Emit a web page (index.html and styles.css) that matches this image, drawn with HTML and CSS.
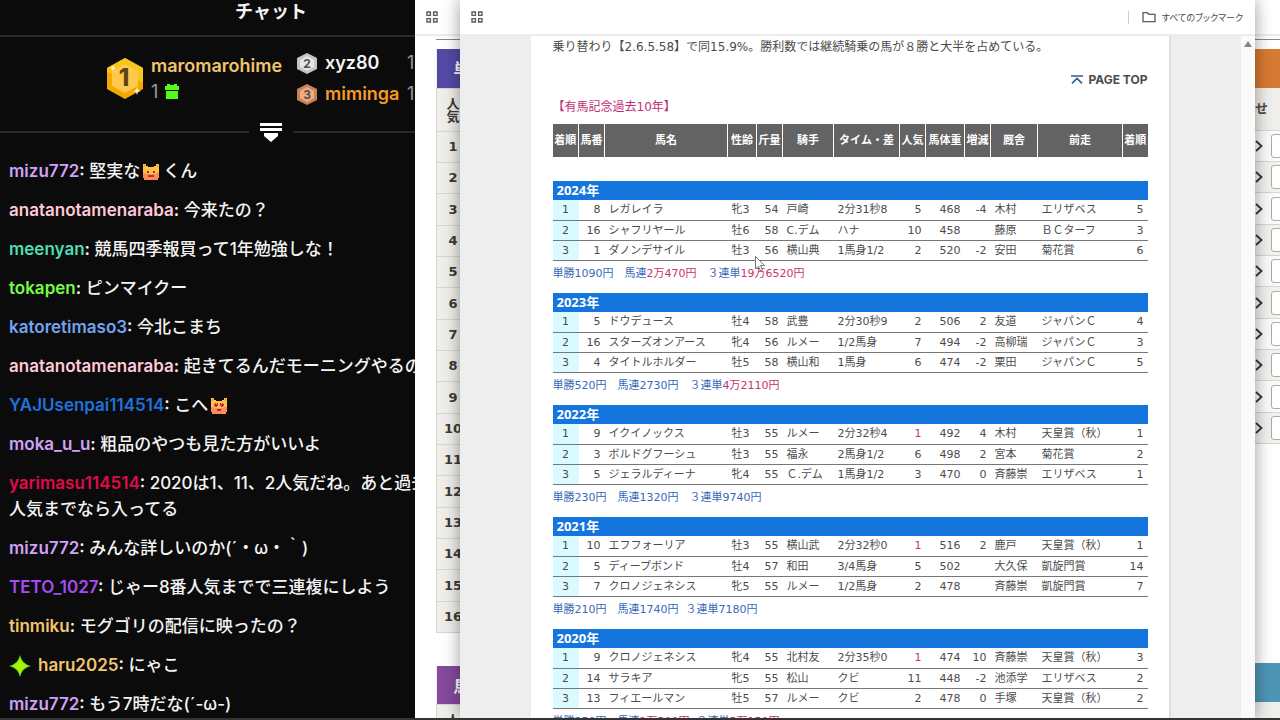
FILE: index.html
```
<!DOCTYPE html>
<html lang="ja">
<head>
    <meta charset="UTF-8">
    <meta name="viewport" content="width=device-width, initial-scale=1.0">
    <title>有馬記念過去10年</title>
    <link rel="stylesheet" href="styles.css">
</head>
<body>
    <!-- Shared icons -->
    <svg class="sprite" aria-hidden="true">
        <symbol id="apps" viewBox="0 0 12 12">
            <path d="M1 1h3.4v3.4H1zM7.6 1H11v3.4H7.6zM1 7.6h3.4V11H1zM7.6 7.6H11V11H7.6z" fill="none" stroke="#5a5a5a" stroke-width="1.4"/>
        </symbol>
        <symbol id="cat" viewBox="0 0 16 16">
            <path d="M0 0h3v2h2v1h6V2h2V0h3v14h-1v2H1v-2H0z" fill="#ffc247"/>
            <path d="M0 9h3v1h10V9h3v5h-1v2H1v-2H0z" fill="#ff8a5c"/>
            <path d="M1 1h1v2H1zM14 1h1v2h-1z" fill="#f08a3c"/>
        </symbol>
        <symbol id="chevron" viewBox="0 0 8 12">
            <path d="M1 1l5.5 5L1 11" fill="none" stroke="#333" stroke-width="1.8"/>
        </symbol>
    </svg>

    <div class="screen">
        <!-- Chat -->
        <aside class="chat">
            <div class="chat-inner">
                <h1 class="chat-title">チャット</h1>

                <div class="leaders">
                    <svg class="medal-big" viewBox="0 0 36 41">
                        <path d="M18 0l18 10v21L18 41 0 31V10z" fill="#f5a800"/>
                        <path d="M18 0l18 10v14L0 14v-4z" fill="#f7c61c"/>
                        <path d="M18 6l13 7v15l-13 7-13-7V13z" fill="#ffc94f"/>
                        <text x="17" y="28" text-anchor="middle" class="medal-big-num">1</text>
                        <path d="M30 29l1 3 3 1-3 1-1 3-1-3-3-1 3-1zM6 7l1 2 2 1-2 1-1 2-1-2-2-1 2-1z" fill="#fff3bd"/>
                    </svg>
                    <div class="leader-first">
                        <span class="gold">maromarohime</span>
                        <span class="gifts">1
                            <svg class="gift" viewBox="0 0 14 15"><path d="M2 0h3v1h4V0h3v2h2v4H0V2h2zM1 7h12v8H1z" fill="#53fc18"/></svg>
                        </span>
                    </div>
                    <ul class="leader-rest">
                        <li>
                            <svg class="medal" viewBox="0 0 20 21">
                                <path d="M10 0l10 5v11l-10 5-10-5V5z" fill="#c4c4c6"/>
                                <path d="M10 3l7 4v7l-7 4-7-4V7z" fill="#e6e6e8"/>
                                <text x="10" y="15" text-anchor="middle" class="medal-num">2</text>
                            </svg>
                            <span>xyz80</span><span class="count">1</span>
                        </li>
                        <li>
                            <svg class="medal" viewBox="0 0 20 21">
                                <path d="M10 0l10 5v11l-10 5-10-5V5z" fill="#c9835a"/>
                                <path d="M10 3l7 4v7l-7 4-7-4V7z" fill="#f0ad85"/>
                                <text x="10" y="15" text-anchor="middle" class="medal-num">3</text>
                            </svg>
                            <span class="orange">miminga</span><span class="count">1</span>
                        </li>
                    </ul>
                </div>

                <div class="divider">
                    <button class="collapse" aria-label="リーダーボードを開く">
                        <svg viewBox="0 0 22 19"><path d="M0 0h22v3H0zM0 5h22v3H0zM4 10h14v3l-7 6-7-6z" fill="#fff"/></svg>
                    </button>
                </div>

                <div class="messages">
                    <p><b class="lilac">mizu772</b><b>:</b> 堅実な<svg class="emote" viewBox="0 0 16 16"><use href="#cat"/><path d="M4 7h2v2H4zM10 7h2v2h-2z" fill="#8a3a1e"/><path d="M5 11h6v2H5z" fill="#b83232"/></svg>くん</p>
                    <p><b class="pink">anatanotamenaraba</b><b>:</b> 今来たの？</p>
                    <p><b class="teal">meenyan</b><b>:</b> 競馬四季報買って1年勉強しな！</p>
                    <p><b class="green">tokapen</b><b>:</b> ピンマイクー</p>
                    <p><b class="sky">katoretimaso3</b><b>:</b> 今北こまち</p>
                    <p><b class="pink">anatanotamenaraba</b><b>:</b> 起きてるんだモーニングやるの</p>
                    <p><b class="blue">YAJUsenpai114514</b><b>:</b> こへ<svg class="emote" viewBox="0 0 16 16"><use href="#cat"/><path d="M3 6h1v-1h1v1h1V5h1v3H6v1H4V8H3zM9 5h1v1h1V5h1v1h1v2h-1v1h-2V8H9z" fill="#d8204a"/><path d="M6 11h4v2H6z" fill="#a03030"/></svg></p>
                    <p><b class="lilac">moka_u_u</b><b>:</b> 粗品のやつも見た方がいいよ</p>
                    <p><b class="red">yarimasu114514</b><b>:</b> 2020は1、11、2人気だね。あと過去<br>人気までなら入ってる</p>
                    <p><b class="lilac">mizu772</b><b>:</b> みんな詳しいのか(´・ω・｀)</p>
                    <p><b class="violet">TETO_1027</b><b>:</b> じゃー8番人気までで三連複にしよう</p>
                    <p><b class="gold">tinmiku</b><b>:</b> モグゴリの配信に映ったの？</p>
                    <p><svg class="spark" viewBox="0 0 22 22"><path d="M11 0q2 9 11 11q-9 2-11 11q-2-9-11-11q9-2 11-11z" fill="#5fe01a"/><path d="M11 3q2 6 8 8q-6 2-8 8q-2-6-8-8q6-2 8-8z" fill="#a8f500"/></svg><b class="gold">haru2025</b><b>:</b> にゃこ</p>
                    <p><b class="lilac">mizu772</b><b>:</b> もう7時だな(´-ω-)</p>
                </div>
            </div>
        </aside>

        <div class="desktop">
            <!-- Odds window behind -->
            <section class="odds">
                <div class="toolbar"><svg class="apps"><use href="#apps"/></svg></div>
                <div class="odds-body">
                    <div class="odds-left">
                        <table class="rank">
                            <thead>
                                <tr class="band indigo"><th>単勝</th></tr>
                                <tr class="sub"><th>人<br>気</th></tr>
                            </thead>
                            <tbody>
                                <tr><td>1</td></tr>
                                <tr><td>2</td></tr>
                                <tr><td>3</td></tr>
                                <tr><td>4</td></tr>
                                <tr><td>5</td></tr>
                                <tr><td>6</td></tr>
                                <tr><td>7</td></tr>
                                <tr><td>8</td></tr>
                                <tr><td>9</td></tr>
                                <tr><td>10</td></tr>
                                <tr><td>11</td></tr>
                                <tr><td>12</td></tr>
                                <tr><td>13</td></tr>
                                <tr><td>14</td></tr>
                                <tr><td>15</td></tr>
                                <tr><td>16</td></tr>
                            </tbody>
                        </table>
                        <table class="rank next">
                            <tr class="band purple"><th>馬連</th></tr>
                            <tr class="sub"><th>人<br>気</th></tr>
                        </table>
                    </div>
                    <div class="odds-right">
                        <div class="combo-band orange-bg"></div>
                        <div class="combo-head">せ</div>
                        <ul class="combos">
                            <li><svg><use href="#chevron"/></svg><button aria-label="1番人気"></button></li>
                            <li><svg><use href="#chevron"/></svg><button aria-label="2番人気"></button></li>
                            <li><svg><use href="#chevron"/></svg><button aria-label="3番人気"></button></li>
                            <li><svg><use href="#chevron"/></svg><button aria-label="4番人気"></button></li>
                            <li><svg><use href="#chevron"/></svg><button aria-label="5番人気"></button></li>
                            <li><svg><use href="#chevron"/></svg><button aria-label="6番人気"></button></li>
                            <li><svg><use href="#chevron"/></svg><button aria-label="7番人気"></button></li>
                            <li><svg><use href="#chevron"/></svg><button aria-label="8番人気"></button></li>
                            <li><svg><use href="#chevron"/></svg><button aria-label="9番人気"></button></li>
                            <li><svg><use href="#chevron"/></svg><button aria-label="10番人気"></button></li>
                        </ul>
                        <div class="combo-band blue-bg"></div>
                        <div class="combo-head"></div>
                    </div>
                </div>
            </section>

            <!-- Race data window in front -->
            <section class="race">
                <div class="toolbar">
                    <svg class="apps"><use href="#apps"/></svg>
                    <a class="bookmarks" href="#">
                        <svg viewBox="0 0 14 12"><path d="M1 10V1.7h4.400L7 3.400h6V10.600H1z" fill="none" stroke="#5a5a5a" stroke-width="1.3"/></svg>
                        すべてのブックマーク
                    </a>
                </div>
                <div class="race-body">
                    <main class="page">
                        <p class="lead">乗り替わり【2.6.5.58】で同15.9%。勝利数では継続騎乗の馬が８勝と大半を占めている。</p>
                        <a class="page-top" href="#">
                            <svg viewBox="0 0 12 9"><path d="M0 1h12M1 8.400l5-5 5 5" fill="none" stroke="#2f5f9a" stroke-width="1.6"/></svg>
                            PAGE TOP
                        </a>
                        <h2>【有馬記念過去10年】</h2>
                        <table class="results">
                            <thead>
                                <tr><th class="w-s">着順</th><th class="w-s">馬番</th><th class="w-name">馬名</th><th class="w-sex">性齢</th><th class="w-s">斤量</th><th class="w-jockey">騎手</th><th class="w-time">タイム・差</th><th class="w-s">人気</th><th class="w-weight">馬体重</th><th class="w-s">増減</th><th class="w-stable">厩舎</th><th class="w-prev">前走</th><th>着順</th></tr>
                            </thead>
                            <tbody>
                                <tr class="year"><th colspan="13">2024年</th></tr>
                                <tr><td>1</td><td>8</td><td>レガレイラ</td><td>牝3</td><td>54</td><td>戸崎</td><td>2分31秒8</td><td>5</td><td>468</td><td>-4</td><td>木村</td><td>エリザベス</td><td>5</td></tr>
                                <tr><td>2</td><td>16</td><td>シャフリヤール</td><td>牡6</td><td>58</td><td>C.デム</td><td>ハナ</td><td>10</td><td>458</td><td></td><td>藤原</td><td>ＢＣターフ</td><td>3</td></tr>
                                <tr><td>3</td><td>1</td><td>ダノンデサイル</td><td>牡3</td><td>56</td><td>横山典</td><td>1馬身1/2</td><td>2</td><td>520</td><td>-2</td><td>安田</td><td>菊花賞</td><td>6</td></tr>
                                <tr class="payout"><td colspan="13">単勝1090円　馬連<em>2万470円</em>　３連単<em>19万6520円</em></td></tr>
                            </tbody>
                            <tbody>
                                <tr class="year"><th colspan="13">2023年</th></tr>
                                <tr><td>1</td><td>5</td><td>ドウデュース</td><td>牡4</td><td>58</td><td>武豊</td><td>2分30秒9</td><td>2</td><td>506</td><td>2</td><td>友道</td><td>ジャパンＣ</td><td>4</td></tr>
                                <tr><td>2</td><td>16</td><td>スターズオンアース</td><td>牝4</td><td>56</td><td>ルメー</td><td>1/2馬身</td><td>7</td><td>494</td><td>-2</td><td>高柳瑞</td><td>ジャパンＣ</td><td>3</td></tr>
                                <tr><td>3</td><td>4</td><td>タイトルホルダー</td><td>牡5</td><td>58</td><td>横山和</td><td>1馬身</td><td>6</td><td>474</td><td>-2</td><td>栗田</td><td>ジャパンＣ</td><td>5</td></tr>
                                <tr class="payout"><td colspan="13">単勝520円　馬連2730円　３連単<em>4万2110円</em></td></tr>
                            </tbody>
                            <tbody>
                                <tr class="year"><th colspan="13">2022年</th></tr>
                                <tr><td>1</td><td>9</td><td>イクイノックス</td><td>牡3</td><td>55</td><td>ルメー</td><td>2分32秒4</td><td><em>1</em></td><td>492</td><td>4</td><td>木村</td><td>天皇賞（秋）</td><td>1</td></tr>
                                <tr><td>2</td><td>3</td><td>ボルドグフーシュ</td><td>牡3</td><td>55</td><td>福永</td><td>2馬身1/2</td><td>6</td><td>498</td><td>2</td><td>宮本</td><td>菊花賞</td><td>2</td></tr>
                                <tr><td>3</td><td>5</td><td>ジェラルディーナ</td><td>牝4</td><td>55</td><td>Ｃ.デム</td><td>1馬身1/2</td><td>3</td><td>470</td><td>0</td><td>斉藤崇</td><td>エリザベス</td><td>1</td></tr>
                                <tr class="payout"><td colspan="13">単勝230円　馬連1320円　３連単9740円</td></tr>
                            </tbody>
                            <tbody>
                                <tr class="year"><th colspan="13">2021年</th></tr>
                                <tr><td>1</td><td>10</td><td>エフフォーリア</td><td>牡3</td><td>55</td><td>横山武</td><td>2分32秒0</td><td><em>1</em></td><td>516</td><td>2</td><td>鹿戸</td><td>天皇賞（秋）</td><td>1</td></tr>
                                <tr><td>2</td><td>5</td><td>ディープボンド</td><td>牡4</td><td>57</td><td>和田</td><td>3/4馬身</td><td>5</td><td>502</td><td></td><td>大久保</td><td>凱旋門賞</td><td>14</td></tr>
                                <tr><td>3</td><td>7</td><td>クロノジェネシス</td><td>牝5</td><td>55</td><td>ルメー</td><td>1/2馬身</td><td>2</td><td>478</td><td></td><td>斉藤崇</td><td>凱旋門賞</td><td>7</td></tr>
                                <tr class="payout"><td colspan="13">単勝210円　馬連1740円 &nbsp;３連単7180円</td></tr>
                            </tbody>
                            <tbody>
                                <tr class="year"><th colspan="13">2020年</th></tr>
                                <tr><td>1</td><td>9</td><td>クロノジェネシス</td><td>牝4</td><td>55</td><td>北村友</td><td>2分35秒0</td><td><em>1</em></td><td>474</td><td>10</td><td>斉藤崇</td><td>天皇賞（秋）</td><td>3</td></tr>
                                <tr><td>2</td><td>14</td><td>サラキア</td><td>牝5</td><td>55</td><td>松山</td><td>クビ</td><td>11</td><td>448</td><td>-2</td><td>池添学</td><td>エリザベス</td><td>2</td></tr>
                                <tr><td>3</td><td>13</td><td>フィエールマン</td><td>牡5</td><td>57</td><td>ルメー</td><td>クビ</td><td>2</td><td>478</td><td>0</td><td>手塚</td><td>天皇賞（秋）</td><td>2</td></tr>
                                <tr class="payout"><td colspan="13">単勝250円　馬連<em>1万300円</em> &nbsp;３連単<em>5万150円</em></td></tr>
                            </tbody>
                        </table>
                    </main>
                    <div class="scrollbar">
                        <svg viewBox="0 0 8 6"><path d="M4 0l4 6H0z" fill="#858585"/></svg>
                    </div>
                </div>
                <svg class="cursor" viewBox="0 0 10 16"><path d="M.5.5v12.5l3-3 2 5 2-1-2-4.500h4z" fill="#fff" stroke="#777"/></svg>
            </section>
        </div>
    </div>
</body>
</html>
```

FILE: styles.css
```
* {
    box-sizing: border-box;
}
body {
    margin: 0;
    font-family: "DejaVu Sans", "Noto Sans CJK JP", sans-serif;
    color: #4c4c4c;
}
h1, h2, p, ul {
    margin: 0;
    padding: 0;
}
ul {
    list-style: none;
}
button {
    padding: 0;
    border: none;
    background: none;
}
a {
    color: inherit;
    text-decoration: none;
}
svg {
    display: block;
    flex: none;
}
.sprite {
    display: none;
}
.screen {
    display: flex;
    height: 100vh;
    overflow: hidden;
    border-bottom: 2px solid #333;
}

/* Chat */
.chat {
    flex: 0 0 415px;
    overflow: hidden;
    background: #0b0b0b;
    color: #f4f4f4;
    font-family: Inter, "Noto Sans CJK JP", sans-serif;
}
.chat-inner {
    width: 542px;
}
.chat-title {
    height: 37px;
    border-bottom: 2px solid #2a2a2a;
    text-align: center;
    font-size: 18px;
    line-height: 24px;
}
.leaders {
    display: flex;
    align-items: center;
    height: 83px;
    padding-left: 107px;
    font-size: 18px;
    font-weight: 600;
    line-height: 26px;
}
.medal-big {
    width: 36px;
    height: 41px;
    margin-right: 8px;
}
.medal-big-num {
    font-size: 24px;
    font-weight: 800;
    fill: #5e4410;
}
.leader-first {
    width: 146px;
}
.gifts {
    display: flex;
    align-items: center;
    gap: 7px;
    font-weight: 400;
    color: #9a9a9a;
}
.gift {
    width: 14px;
    height: 15px;
}
.leader-rest li {
    display: flex;
    align-items: center;
    height: 31px;
}
.medal {
    width: 20px;
    height: 21px;
    margin-right: 8px;
}
.medal-num {
    font-size: 12px;
    font-weight: 700;
    fill: #55504c;
}
.leader-rest span {
    min-width: 82px;
}
.leader-rest .count {
    min-width: 0;
    font-weight: 400;
    color: #9a9a9a;
}
.divider {
    display: flex;
    align-items: center;
    gap: 11px;
    height: 24px;
}
.divider::before, .divider::after {
    content: "";
    flex: 1;
    height: 2px;
    background: #2a2a2a;
}
.collapse svg {
    width: 22px;
    height: 19px;
}
.messages {
    padding: 14px 9px 0;
    font-size: 17px;
    font-weight: 500;
    line-height: 26px;
    white-space: nowrap;
}
.messages p {
    margin-bottom: 13px;
}
.messages b {
    font-weight: 600;
}
.emote, .spark {
    display: inline-block;
    vertical-align: -3px;
    width: 16px;
    height: 16px;
    margin: 0 4px 0 3px;
}
.spark {
    width: 22px;
    height: 22px;
    margin: 0 7px 0 0;
    vertical-align: -6px;
}
.gold { color: #f2c46d; }
.orange { color: #f59b22; }
.lilac { color: #d0a2f7; }
.pink { color: #ffc9d6; }
.teal { color: #4fdcb4; }
.green { color: #75fd46; }
.sky { color: #72a4f0; }
.blue { color: #1f72dc; }
.red { color: #e00a4c; }
.violet { color: #a64cf5; }

/* Windows */
.desktop {
    flex: 1;
    position: relative;
    overflow: hidden;
    background: #fff;
}
.toolbar {
    display: flex;
    align-items: center;
    justify-content: space-between;
    height: 36px;
    padding: 0 12px 0 11px;
    border-bottom: 2px solid #ededed;
    background: #fff;
}
.apps {
    width: 12px;
    height: 12px;
}
.odds .toolbar {
    margin-bottom: 3px;
}
.odds-body {
    display: flex;
    justify-content: space-between;
    margin-left: 21px;
    padding-top: 9px;
    border-top: 1px solid #888;
}
.rank {
    width: 34px;
    border-collapse: collapse;
    table-layout: fixed;
    background: #efeeeb;
}
.rank.next {
    margin-top: 33px;
}
.rank td, .sub th {
    height: 31px;
    padding: 0;
    border: 1px solid #d6d5d0;
    font-size: 13px;
    font-weight: bold;
    line-height: 13px;
    text-align: center;
    color: #3d3a36;
}
.rank tr:nth-child(3n) td {
    height: 32px;
}
.sub th {
    height: 43px;
}
.band th {
    height: 39px;
    padding: 0 0 0 17px;
    font-size: 16px;
    text-align: left;
    white-space: nowrap;
    color: #fff;
}
.indigo { background: #544aa6; }
.purple { background: #844a9c; }
.orange-bg { background: #d67a34; }
.blue-bg { background: #4d95b4; }
.odds-right {
    width: 25px;
}
.combo-band {
    height: 39px;
}
.combo-head {
    height: 43px;
    border-bottom: 1px solid #d6d5d0;
    background: #efeeeb;
    font-size: 13px;
    font-weight: bold;
    line-height: 42px;
}
.combos {
    margin-bottom: 219px;
}
.combos li {
    display: flex;
    align-items: center;
    gap: 8px;
    height: 31px;
    border-bottom: 1px solid #d6d5d0;
    background: #fafafa;
}
.combos li:nth-child(3n) {
    height: 32px;
}
.combos li:nth-child(even) {
    background: #f3f1ee;
}
.combos svg {
    width: 8px;
    height: 12px;
}
.combos button {
    flex: 0 0 40px;
    height: 24px;
    border: 1px solid #aaa;
    border-radius: 3px;
    background: #fff;
}
.race {
    position: absolute;
    top: 0;
    right: 25px;
    bottom: 0;
    left: 45px;
    display: flex;
    flex-direction: column;
    overflow: hidden;
    background: #fff;
    box-shadow: 0 0 16px rgba(0, 0, 0, 0.4);
}
.bookmarks {
    display: flex;
    align-items: center;
    gap: 6px;
    height: 13px;
    padding-left: 13px;
    border-left: 1px solid #ccc;
    font-family: "Noto Sans CJK JP", sans-serif;
    font-size: 9px;
    font-feature-settings: "palt";
}
.bookmarks svg {
    width: 14px;
    height: 12px;
}
.race-body {
    flex: 1;
    display: flex;
    min-height: 0;
    background: #eee;
}
.page {
    width: 640px;
    margin: 0 auto;
    padding: 0 21px 0 22px;
    border-right: 2px solid #ddd;
    background: #fff;
}
.lead {
    font-size: 12px;
    line-height: 22px;
    white-space: nowrap;
}
.page-top {
    display: flex;
    align-items: center;
    justify-content: flex-end;
    gap: 5px;
    height: 43px;
    font-family: Inter, sans-serif;
    font-size: 12px;
    font-weight: 700;
}
.page-top svg {
    width: 12px;
    height: 9px;
}
.page h2 {
    margin-bottom: 11px;
    font-size: 12px;
    font-weight: normal;
    line-height: 12px;
    color: #c22d76;
}
.results {
    width: 100%;
    border-collapse: collapse;
    table-layout: fixed;
    font-size: 11px;
    line-height: 17px;
    white-space: nowrap;
}
.results thead th {
    height: 33px;
    padding: 0;
    border-right: 1px solid #fff;
    background: #636363;
    color: #fff;
}
.results thead th:last-child {
    border-right: none;
}
.w-s { width: 26px; }
.w-name { width: 123px; }
.w-sex { width: 29px; }
.w-jockey { width: 51px; }
.w-time { width: 66px; }
.w-weight { width: 39px; }
.w-stable { width: 47px; }
.w-prev { width: 85px; }
.results thead::after {
    content: "";
    display: block;
    height: 24px;
}
.results td {
    height: 20px;
    padding: 0 4px;
    border-bottom: 1px solid #777;
}
.results td:nth-child(1) {
    background: #d9fbff;
    text-align: center;
}
.results td:nth-child(2), .results td:nth-child(5), .results td:nth-child(8),
.results td:nth-child(9), .results td:nth-child(10), .results td:nth-child(13) {
    text-align: right;
}
.results em {
    font-style: normal;
    color: #c8326e;
}
.results .year th {
    height: 19px;
    padding: 0 4px;
    background: #1476dc;
    font-family: "Noto Sans", "Noto Sans CJK JP", sans-serif;
    font-size: 13px;
    text-align: left;
    color: #fff;
}
.results .payout td {
    height: 33px;
    padding: 4px 0 0;
    border: none;
    background: none;
    text-align: left;
    vertical-align: top;
    color: #3a68b8;
}
.scrollbar {
    width: 14px;
    padding: 5px 3px;
    background: #fafafa;
}
.scrollbar svg {
    width: 8px;
    height: 6px;
}
.cursor {
    position: absolute;
    top: 256px;
    left: 295px;
    width: 10px;
    height: 16px;
}
```
